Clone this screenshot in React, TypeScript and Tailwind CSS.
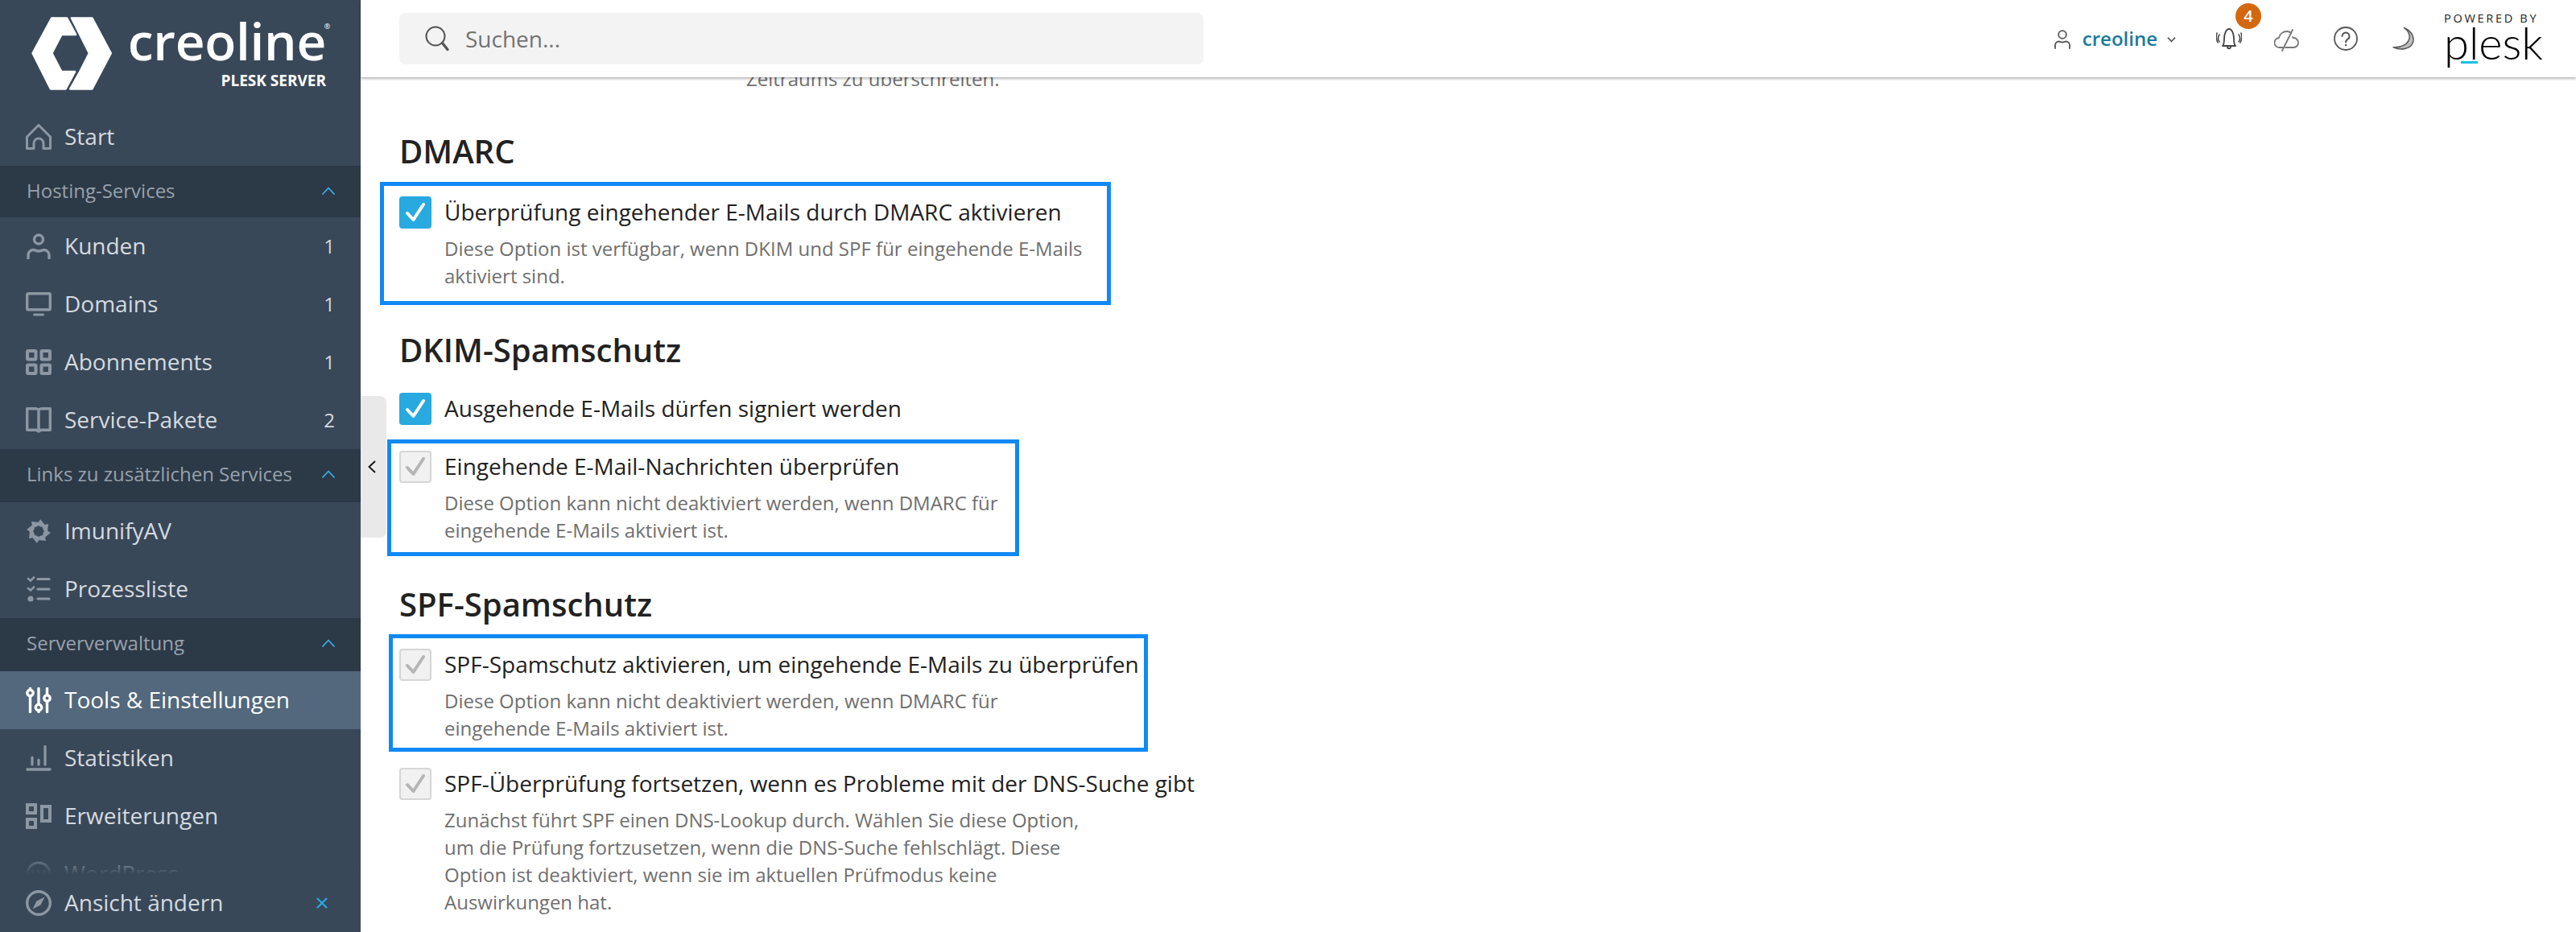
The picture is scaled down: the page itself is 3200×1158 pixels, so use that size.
import React from "react";

const FONT = "font-['Open_Sans',sans-serif]";

type IconProps = { className?: string };

const HomeIcon = ({ className }: IconProps) => (
  <svg viewBox="0 0 32 32" className={className} fill="none" stroke="currentColor" strokeWidth="3" strokeLinejoin="round">
    <path d="M1.5 16 16 1.5 30.5 16v14.5H22V24a6 6 0 0 0-12 0v6.5H1.5z" />
  </svg>
);

const UserIcon = ({ className }: IconProps) => (
  <svg viewBox="0 0 32 32" className={className} fill="none" stroke="currentColor" strokeWidth="3.4" strokeLinecap="round">
    <circle cx="16" cy="7.5" r="5.5" />
    <path d="M3 31v-4a6.5 6.5 0 0 1 6.5-6.5c2 0 3 1.5 6.5 1.5s4.500-1.500 6.500-1.500A6.500 6.500 0 0 1 29 27v4" />
  </svg>
);

const MonitorIcon = ({ className }: IconProps) => (
  <svg viewBox="0 0 32 32" className={className} fill="none" stroke="currentColor" strokeWidth="3.4" strokeLinecap="round">
    <rect x="1.700" y="2.700" width="28.600" height="20" rx="1.500" />
    <path strokeWidth="3" d="M10.500 29h11" />
  </svg>
);

const GridIcon = ({ className }: IconProps) => (
  <svg viewBox="0 0 32 32" className={className} fill="none" stroke="currentColor" strokeWidth="4">
    <rect x="2" y="2" width="10.500" height="10.500" rx="1" />
    <rect x="19.500" y="2" width="10.500" height="10.500" rx="1" />
    <rect x="2" y="19.500" width="10.500" height="10.500" rx="1" />
    <rect x="19.500" y="19.500" width="10.500" height="10.500" rx="1" />
  </svg>
);

const BookIcon = ({ className }: IconProps) => (
  <svg viewBox="0 0 32 32" className={className} fill="none" stroke="currentColor" strokeWidth="3.400" strokeLinejoin="round">
    <path d="M1.700 1.700H13l3 1.300 3-1.300h11.300v26.600H19l-3 1.700-3-1.700H1.700zM16 3v25" />
  </svg>
);

const ShieldStarIcon = ({ className }: IconProps) => (
  <svg viewBox="0 0 32 32" className={className} fill="currentColor">
    {[0, 45, 90, 135, 180, 225, 270, 315].map((deg) => (
      <polygon key={deg} points="16,1 23,7.500 19,10.500 12.500,8.500" transform={`rotate(${deg + 8} 16 16)`} />
    ))}
  </svg>
);

const ListIcon = ({ className }: IconProps) => (
  <svg viewBox="0 0 32 32" className={className} fill="none" stroke="currentColor" strokeWidth="3.200" strokeLinecap="round">
    <path d="M15 3.500h14M15 16h14M15 28h14" />
    <path strokeWidth="2.600" d="m3 3 3 2.500L10 1.500M3 15l3 2.500 4-4" />
    <circle cx="6" cy="28" r="3.600" fill="currentColor" stroke="none" />
  </svg>
);

const SlidersIcon = ({ className }: IconProps) => (
  <svg viewBox="0 0 32 32" className={className} fill="none" stroke="currentColor" strokeWidth="3.400" strokeLinecap="round">
    <path d="M5.500 12v18.500M5.500 1.500v1M16 1.500v19M16 29v1.500M26.500 1.500V9M26.500 18v12.500" />
    <circle cx="5.500" cy="7" r="3.700" />
    <circle cx="16" cy="25" r="3.700" />
    <circle cx="26.500" cy="13.500" r="3.700" />
  </svg>
);

const ChartIcon = ({ className }: IconProps) => (
  <svg viewBox="0 0 32 32" className={className} fill="none" stroke="currentColor" strokeWidth="3.200" strokeLinecap="round">
    <path d="M8 24v-9M16 24v-6M24 24V1.500" />
    <path strokeWidth="3.600" d="M2 30h28" />
  </svg>
);

const BlocksIcon = ({ className }: IconProps) => (
  <svg viewBox="0 0 32 32" className={className} fill="none" stroke="currentColor" strokeWidth="4">
    <rect x="2" y="2" width="10" height="10" />
    <rect x="2" y="20" width="10" height="10" />
    <rect x="20" y="4" width="10" height="18" />
  </svg>
);

const WordPressIcon = ({ className }: IconProps) => (
  <svg viewBox="0 0 32 32" className={className} fill="none" stroke="currentColor" strokeWidth="3">
    <circle cx="16" cy="16" r="14" />
    <path strokeWidth="2.500" d="m8 11 6 16 3-9-2-7M15 11l6 16 3-9c1-3-1-5-1-7" />
  </svg>
);

const CompassIcon = ({ className }: IconProps) => (
  <svg viewBox="0 0 32 32" className={className} fill="none" stroke="currentColor" strokeWidth="3.400">
    <circle cx="16" cy="16" r="14.300" />
    <path d="M23.500 8.500 18.500 18.500 8.500 23.500 13.500 13.500z" fill="currentColor" stroke="none" />
  </svg>
);

const ChevronUp = () => (
  <svg viewBox="0 0 16 10" className="h-[10px] w-[16px]" fill="none" stroke="#36b1e8" strokeWidth="1.800" strokeLinecap="round" strokeLinejoin="round">
    <path d="m1 9 7-7.500L15 9" />
  </svg>
);

const CreolineLogo = () => (
  <div className="flex h-[134px] shrink-0 pl-[39px] pt-[21px]">
    <svg viewBox="58 33 300 272" className="h-[91px] w-[100px] shrink-0" fill="#ffffff" stroke="#ffffff" strokeWidth="8" strokeLinejoin="round">
      <path d="M134 37h56l33 61h-53l-36 70 36 69h50l-35 64h-55l-67-133z" />
      <path d="M208 37h76l70 131-70 133h-81l36-64 35-69-35-70z" />
    </svg>
    <div className="ml-[16px] flex w-[250px] flex-col items-end">
      <div className="relative -mt-[8px] h-[76px] text-[64px] font-semibold leading-[76px] tracking-[-0.300px] text-white">
        creoline
        <span className="absolute -right-[5px] top-[15px] text-[9px] font-normal leading-[10px]">®</span>
      </div>
      <div className="text-[19px] font-bold leading-[22px] text-white">PLESK SERVER</div>
    </div>
  </div>
);

const NavItem = ({
  icon,
  label,
  count,
  active,
}: {
  icon: React.ReactNode;
  label: string;
  count?: number;
  active?: boolean;
}) => (
  <div
    className={
      active
        ? "flex h-[72px] items-center gap-[16px] bg-[#53687c] px-[32px] text-white"
        : "flex h-[72px] items-center gap-[16px] px-[32px] text-[#d5dadf]"
    }
  >
    <span className={active ? "text-white" : "text-[#8c97a3]"}>{icon}</span>
    <span className="-mt-[2px] flex-1 text-[28px] leading-[40px]">{label}</span>
    {count !== undefined && <span className="text-[24px]">{count}</span>}
  </div>
);

const NavSection = ({ label, first }: { label: string; first?: boolean }) => (
  <div
    className={
      first
        ? "flex h-[64px] items-center justify-between bg-[#2c3947] pb-[2px] pl-[33px] pr-[32px] text-[24px] text-[#98a2ac]"
        : "flex h-[66px] items-center justify-between bg-[#2c3947] pb-[4px] pl-[33px] pr-[32px] text-[24px] text-[#98a2ac]"
    }
  >
    <span>{label}</span>
    <ChevronUp />
  </div>
);

const iconCls = "block h-[32px] w-[32px]";

const Sidebar = () => (
  <aside className="flex h-full w-[448px] shrink-0 flex-col bg-[#394859]">
    <CreolineLogo />
    <nav className="relative flex-1 overflow-hidden">
      <NavItem icon={<HomeIcon className={iconCls} />} label="Start" />
      <NavSection first label="Hosting-Services" />
      <NavItem icon={<UserIcon className={iconCls} />} label="Kunden" count={1} />
      <NavItem icon={<MonitorIcon className={iconCls} />} label="Domains" count={1} />
      <NavItem icon={<GridIcon className={iconCls} />} label="Abonnements" count={1} />
      <NavItem icon={<BookIcon className={iconCls} />} label="Service-Pakete" count={2} />
      <NavSection label="Links zu zusätzlichen Services" />
      <NavItem icon={<ShieldStarIcon className={iconCls} />} label="ImunifyAV" />
      <NavItem icon={<ListIcon className={iconCls} />} label="Prozessliste" />
      <NavSection label="Serververwaltung" />
      <NavItem icon={<SlidersIcon className={iconCls} />} label="Tools & Einstellungen" active />
      <NavItem icon={<ChartIcon className={iconCls} />} label="Statistiken" />
      <NavItem icon={<BlocksIcon className={iconCls} />} label="Erweiterungen" />
      <NavItem icon={<WordPressIcon className={iconCls} />} label="WordPress" />
      <div className="absolute inset-x-0 bottom-0 h-[30px] bg-gradient-to-b from-[#394859]/0 to-[#394859]" />
    </nav>
    <div className="flex h-[72px] shrink-0 items-center gap-[16px] pl-[32px] pr-[41px] text-[#d5dadf]">
      <span className="text-[#8c97a3]">
        <CompassIcon className={iconCls} />
      </span>
      <span className="-mt-[2px] flex-1 text-[28px] leading-[40px]">Ansicht ändern</span>
      <svg viewBox="0 0 14 14" className="h-[14px] w-[14px]" fill="none" stroke="#29a9e0" strokeWidth="2.200">
        <path d="m1 1 12 12M13 1 1 13" />
      </svg>
    </div>
  </aside>
);

const PleskLogo = () => (
  <div className="ml-[37px] flex w-[118px] flex-col">
    <div className="h-[16px] whitespace-nowrap text-[14.500px] leading-[16px] tracking-[2.700px] text-[#222222]">POWERED BY</div>
    <div className="relative h-[50px] font-['Lato',sans-serif] text-[56px] font-light leading-[44px] text-black">
      plesk
      <span className="absolute left-[21px] top-[45px] h-[3px] w-[21px] bg-[#1cc0e4]" />
    </div>
  </div>
);

const Header = () => (
  <header className="relative z-10 flex h-[96px] shrink-0 items-center bg-white pl-[48px] pr-[46px] shadow-[0_2px_3px_rgba(0,0,0,0.28)]">
    <div className="flex h-[64px] w-[999px] items-center rounded-[8px] bg-[#f3f3f3] pl-[32px]">
      <svg viewBox="0 0 32 32" className="h-[32px] w-[32px]" fill="none" stroke="#555555" strokeWidth="2">
        <circle cx="13" cy="13" r="11.500" />
        <path strokeWidth="3.400" strokeLinecap="round" d="m21.500 21.500 6.500 8" />
      </svg>
      <span className="ml-[18px] text-[28px] text-[#737373]">Suchen...</span>
    </div>
    <div className="ml-auto flex items-center">
      <svg viewBox="0 0 20 24" className="mt-[2px] h-[24px] w-[20px]" fill="none" stroke="#555555" strokeWidth="1.800" strokeLinecap="round">
        <circle cx="10" cy="6" r="4.800" />
        <path d="M1 23v-4a4.500 4.500 0 0 1 4.500-4.500c1.500 0 2 1 4.500 1s3-1 4.500-1A4.500 4.500 0 0 1 19 19v4" />
      </svg>
      <span className="ml-[15px] text-[24px] font-semibold text-[#1a7a9e]">creoline</span>
      <svg viewBox="0 0 12 8" className="ml-[12px] mt-[2px] h-[8px] w-[11px]" fill="none" stroke="#555555" strokeWidth="1.800">
        <path d="m1 1.500 5 5 5-5" />
      </svg>
      <div className="relative ml-[50px]">
        <svg viewBox="0 0 32 28" className="block h-[28px] w-[32px]" fill="none" stroke="#444444" strokeWidth="1.800" strokeLinecap="round" strokeLinejoin="round">
          <path d="M8 23c2-2 2-5 2-9 0-5 2-12 6-12s6 7 6 12c0 4 0 7 2 9zM14 24c0 3 4 3 4 0" />
          <path d="M4 9c-2 3-2 6 0 9M1 7c-1 4-1 8 1 12M28 9c2 3 2 6 0 9M31 7c1 4 1 8-1 12" strokeWidth="1.500" />
        </svg>
        <span className="absolute -right-[24px] -top-[30px] flex h-[32px] w-[32px] items-center justify-center rounded-full bg-[#d4680f] text-[20px] font-semibold text-white">
          4
        </span>
      </div>
      <svg viewBox="0 0 32 28" className="ml-[40px] mt-[4px] h-[28px] w-[32px]" fill="none" stroke="#777777" strokeWidth="1.800" strokeLinecap="round" strokeLinejoin="round">
        <path d="M11 23H7a6 6 0 0 1-1-12c1-5 5-8 10-8 2 0 4 1 5 2M23 10c0 1 0 1 1 1a6 6 0 0 1 0 12H14" />
        <path d="M10 27 23 1" />
      </svg>
      <svg viewBox="0 0 30 30" className="ml-[42px] h-[30px] w-[30px]" fill="none" stroke="#555555" strokeWidth="1.800" strokeLinecap="round">
        <circle cx="15" cy="15" r="14" />
        <path strokeWidth="2" d="M10.500 12a4.500 4.500 0 1 1 7 3.700c-1.500 1-2.500 1.800-2.500 3.800" />
        <circle cx="15" cy="23" r="1.200" fill="#555555" stroke="none" />
      </svg>
      <svg viewBox="0 0 28 30" className="ml-[43px] h-[30px] w-[27px]" fill="#bdbdbd" stroke="#555555" strokeWidth="1.500" strokeLinejoin="round">
        <path d="M15 1C25 5 29 14 26 21 23 28 11 31 1 26 12 27 21 22 22 13 22 8 19 4 15 1z" />
      </svg>
      <PleskLogo />
    </div>
  </header>
);

const CheckBox = ({ disabled }: { disabled?: boolean }) => (
  <span
    className={
      disabled
        ? "flex h-[40px] w-[40px] shrink-0 items-center justify-center rounded-[4px] border-2 border-[#d6d6d6] bg-[#f1f1f1]"
        : "flex h-[40px] w-[40px] shrink-0 items-center justify-center rounded-[4px] bg-[#28a9df]"
    }
  >
    <svg viewBox="0 0 40 40" className="h-[40px] w-[40px] shrink-0" fill="none" stroke={disabled ? "#b5b5b5" : "#ffffff"} strokeWidth="4" strokeLinecap="round" strokeLinejoin="round">
      <path d="m10 21 7.500 8L30 10" />
    </svg>
  </span>
);

const Highlight = ({ className }: { className: string }) => (
  <div className={`absolute border-[5px] border-[#1089f5] ${className}`} />
);

const Option = ({
  label,
  description,
  disabled,
  highlight,
  className,
}: {
  label: string;
  description?: string[];
  disabled?: boolean;
  highlight?: string;
  className?: string;
}) => (
  <div className={`relative ${className ?? ""}`}>
    {highlight && <Highlight className={highlight} />}
    <div className="flex items-center gap-[16px]">
      <CheckBox disabled={disabled} />
      <span className="-mt-[2px] text-[28px] leading-[40px] text-[#222222]">{label}</span>
    </div>
    {description && (
      <div className="mt-[8px] pb-[1px] pl-[56px] text-[24px] leading-[34px] text-[#6f6f6f]">
        {description.map((line) => (
          <div key={line}>{line}</div>
        ))}
      </div>
    )}
  </div>
);

const Heading = ({ children, className }: { children: React.ReactNode; className?: string }) => (
  <h2 className={`h-[48px] text-[40px] font-semibold leading-[46px] text-[#222222] ${className ?? ""}`}>{children}</h2>
);

const Content = () => (
  <div className="flex-1 overflow-hidden pl-[48px]">
    <div className="-mt-[15px] ml-[431px] text-[24px] leading-[34px] text-[#6f6f6f]">Zeitraums zu überschreiten.</div>

    <Heading className="mt-[50px]">DMARC</Heading>
    <Option
      className="mt-[31px]"
      label="Überprüfung eingehender E-Mails durch DMARC aktivieren"
      description={["Diese Option ist verfügbar, wenn DKIM und SPF für eingehende E-Mails", "aktiviert sind."]}
      highlight="-left-[24px] -top-[18px] h-[153px] w-[908px]"
    />

    <Heading className="mt-[51px]">DKIM-Spamschutz</Heading>
    <Option className="mt-[28px]" label="Ausgehende E-Mails dürfen signiert werden" />
    <Option
      className="mt-[32px]"
      disabled
      label="Eingehende E-Mail-Nachrichten überprüfen"
      description={["Diese Option kann nicht deaktiviert werden, wenn DMARC für", "eingehende E-Mails aktiviert ist."]}
      highlight="-left-[15px] -top-[14px] h-[145px] w-[785px]"
    />

    <Heading className="mt-[51px]">SPF-Spamschutz</Heading>
    <Option
      className="mt-[30px]"
      disabled
      label="SPF-Spamschutz aktivieren, um eingehende E-Mails zu überprüfen"
      description={["Diese Option kann nicht deaktiviert werden, wenn DMARC für", "eingehende E-Mails aktiviert ist."]}
      highlight="-left-[13px] -top-[18px] h-[146px] w-[943px]"
    />
    <Option
      className="mt-[31px]"
      disabled
      label="SPF-Überprüfung fortsetzen, wenn es Probleme mit der DNS-Suche gibt"
      description={[
        "Zunächst führt SPF einen DNS-Lookup durch. Wählen Sie diese Option,",
        "um die Prüfung fortzusetzen, wenn die DNS-Suche fehlschlägt. Diese",
        "Option ist deaktiviert, wenn sie im aktuellen Prüfmodus keine",
        "Auswirkungen hat.",
      ]}
    />
  </div>
);

export default function App() {
  return (
    <div className={`relative flex h-[1158px] w-[3200px] overflow-hidden bg-white ${FONT}`}>
      <Sidebar />
      <button className="absolute left-[448px] top-[492px] z-10 flex h-[176px] w-[32px] items-center rounded-r-[8px] bg-[#e9e9e9] pl-[9px]">
        <svg viewBox="0 0 10 16" className="h-[16px] w-[10px]" fill="none" stroke="#111111" strokeWidth="1.800">
          <path d="M9 1 1.500 8 9 15" />
        </svg>
      </button>
      <main className="flex min-w-0 flex-1 flex-col">
        <Header />
        <Content />
      </main>
    </div>
  );
}
